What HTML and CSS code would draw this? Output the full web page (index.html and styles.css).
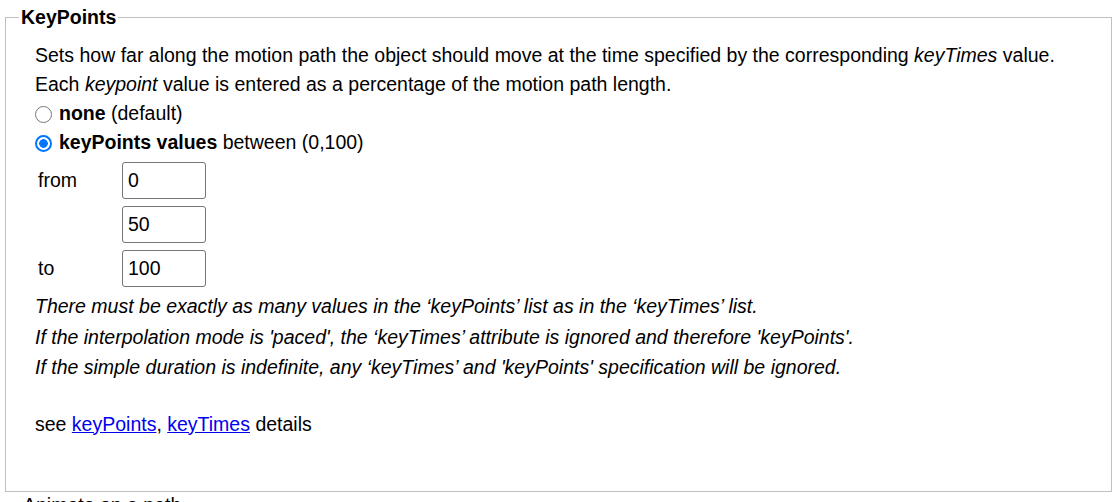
FILE: index.html
```html
<!DOCTYPE html>
<html>
<head>
<meta charset="utf-8">
<link rel="stylesheet" href="styles.css">
</head>
<body>
<fieldset class="group">
  <legend class="group-title">KeyPoints</legend>
  <div class="content">
    <div class="line">Sets how far along the motion path the object should move at the time specified by the corresponding <i>keyTimes</i> value.</div>
    <div class="line">Each <i>keypoint</i> value is entered as a percentage of the motion path length.</div>
    <label class="line radio-line"><input type="radio" name="kp" class="radio"><b>none</b> (default)</label>
    <label class="line radio-line"><input type="radio" name="kp" class="radio" checked><b>keyPoints values</b> between (0,100)</label>
    <div class="values">
      <span class="val-label">from</span><input class="val" type="text" value="0">
      <span class="val-label"></span><input class="val" type="text" value="50">
      <span class="val-label">to</span><input class="val" type="text" value="100">
    </div>
    <div class="notes">
      <div class="note">There must be exactly as many values in the ‘keyPoints’ list as in the ‘keyTimes’ list.</div>
      <div class="note">If the interpolation mode is 'paced', the ‘keyTimes’ attribute is ignored and therefore 'keyPoints'.</div>
      <div class="note">If the simple duration is indefinite, any ‘keyTimes’ and 'keyPoints' specification will be ignored.</div>
    </div>
    <div class="see">see <a href="#">keyPoints</a>, <a href="#">keyTimes</a> details</div>
  </div>
</fieldset>
<div class="next">Animate on a path</div>
</body>
</html>
```
FILE: styles.css
```css
html, body {
  margin: 0;
  padding: 0;
  background: #fff;
}
body {
  font-family: "Liberation Sans", Arial, sans-serif;
  font-size: 19.5px;
  color: #000;
}
.group {
  margin: 7px 7px 0 5px;
  padding: 0;
  border: 1px solid #c0c0c0;
  height: 485px;
  box-sizing: border-box;
}
.group-title {
  margin-left: 13px;
  padding: 0 2px;
  font-weight: bold;
  font-size: 19.5px;
  line-height: 20px;
}
.content {
  padding: 14px 0 0 29px;
}
.line {
  display: block;
  line-height: 29px;
  height: 29px;
  white-space: nowrap;
}
.radio {
  -webkit-appearance: none;
  appearance: none;
  width: 17px;
  height: 17px;
  box-sizing: border-box;
  border: 1.5px solid #767676;
  border-radius: 50%;
  background: #fff;
  margin: 0 7px 0 0;
  vertical-align: -3px;
}
.radio:checked {
  border: 2px solid #0075ff;
  background: radial-gradient(circle, #0075ff 0 4px, #fff 4.6px);
}
.values {
  display: grid;
  grid-template-columns: 87px 84px;
  row-gap: 7px;
  margin-top: 5px;
  align-items: center;
}
.val-label {
  padding-left: 3px;
}
.val {
  width: 84px;
  height: 37px;
  box-sizing: border-box;
  border: 1px solid #767676;
  border-radius: 3px;
  padding: 0 5px;
  font-family: "Liberation Sans", Arial, sans-serif;
  font-size: 19.5px;
  margin: 0;
}
.notes {
  margin-top: 4px;
}
.note {
  font-style: italic;
  line-height: 30.5px;
}
.see {
  margin-top: 26px;
  line-height: 30px;
}
.see a { color: #0000ee; }
.next {
  margin: 2px 0 0 23px;
  line-height: 22px;
}
```
